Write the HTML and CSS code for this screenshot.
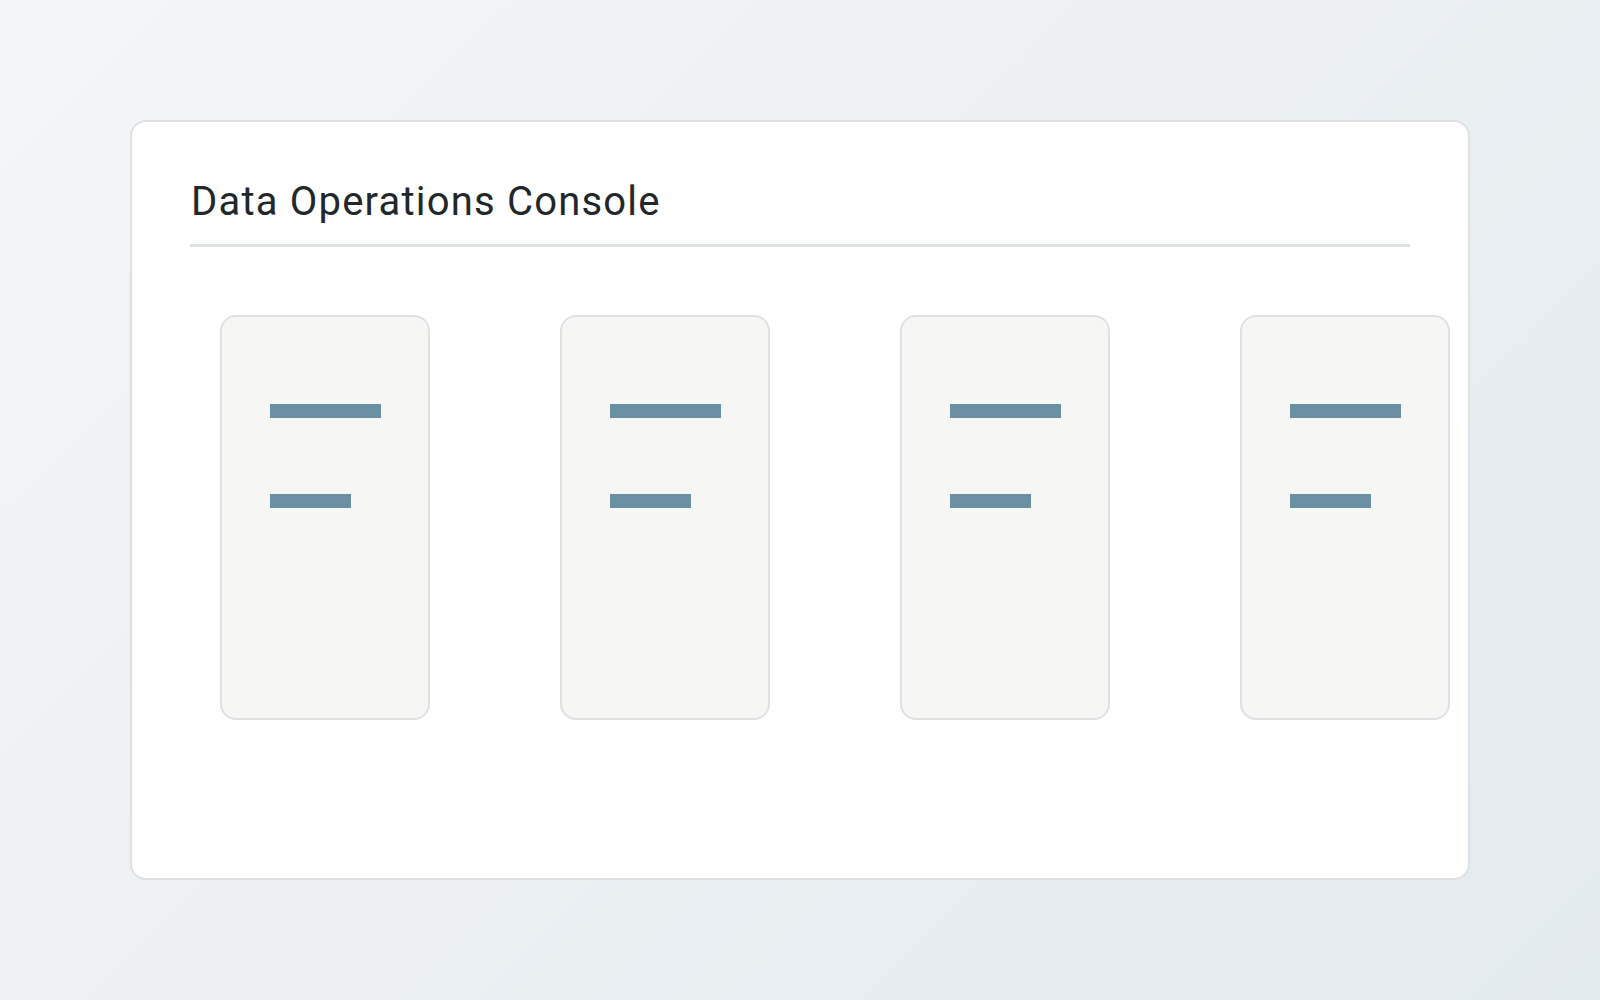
FILE: index.html
```html
<!DOCTYPE html>
<html lang="en">
<head>
	<meta charset="UTF-8">
	<title>Data Operations Console</title>
	<link rel="stylesheet" href="styles.css">
</head>
<body>
	<div class="console">
		<h1 class="console-title">Data Operations Console</h1>
		<div class="lanes">
			<div class="lane">
				<span class="bar bar-long"></span>
				<span class="bar bar-short"></span>
			</div>
			<div class="lane">
				<span class="bar bar-long"></span>
				<span class="bar bar-short"></span>
			</div>
			<div class="lane">
				<span class="bar bar-long"></span>
				<span class="bar bar-short"></span>
			</div>
			<div class="lane">
				<span class="bar bar-long"></span>
				<span class="bar bar-short"></span>
			</div>
		</div>
	</div>
</body>
</html>
```

FILE: styles.css
```css
html, body {
	margin: 0;
	padding: 0;
}
body {
	display: flex;
	align-items: center;
	justify-content: center;
	height: 100vh;
	font-family: Roboto, "Liberation Sans", sans-serif;
	background: linear-gradient(135deg, #f4f5f7 0%, #e4ebef 100%);
}
.console {
	box-sizing: border-box;
	width: 1340px;
	height: 760px;
	padding: 56px 58px 0;
	border: 2px solid #dde1e4;
	border-radius: 16px;
	background-color: #fff;
}
.console-title {
	margin: 0;
	padding: 0 0 18px 1px;
	font-size: 40px;
	font-weight: 400;
	line-height: 48px;
	letter-spacing: 1.2px;
	color: #22272b;
	border-bottom: 3px solid #dfe2e3;
}
.lanes {
	display: flex;
	gap: 130px;
	padding: 68px 0 0 30px;
}
.lane {
	flex-shrink: 0;
	display: flex;
	flex-direction: column;
	align-items: flex-start;
	gap: 76px;
	box-sizing: border-box;
	width: 210px;
	height: 405px;
	padding: 87px 0 0 48px;
	border: 2px solid #e0e0e0;
	border-radius: 16px;
	background-color: #f6f6f5;
}
.bar {
	display: block;
	height: 14px;
	background-color: #6b8fa3;
}
.bar-long { width: 111px; }
.bar-short { width: 81px; }
```
